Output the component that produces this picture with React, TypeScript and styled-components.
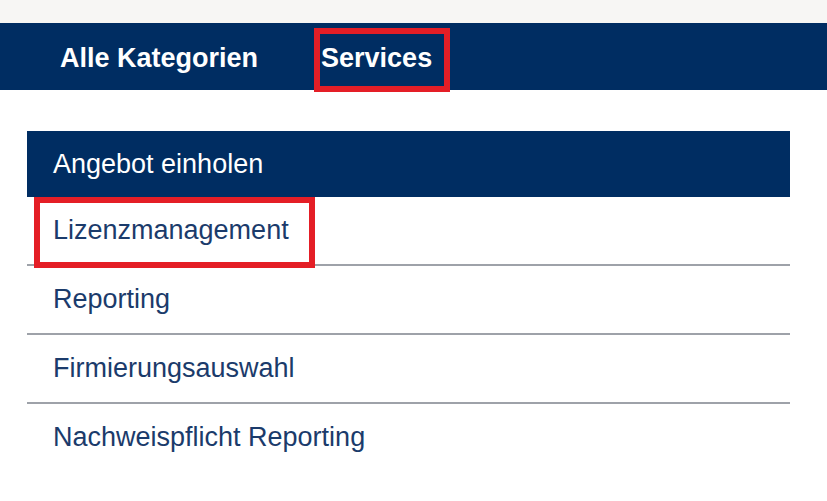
import styled, { createGlobalStyle } from 'styled-components';

const GlobalStyle = createGlobalStyle`
  html, body {
    margin: 0;
    padding: 0;
    background: #ffffff;
    font-family: "Liberation Sans", Arial, sans-serif;
  }
`;

const menuItems = ['Lizenzmanagement', 'Reporting', 'Firmierungsauswahl', 'Nachweispflicht Reporting'];

export default function App() {
  return (
    <>
      <GlobalStyle />
      <Page>
        <TopStrip />
        <NavBar>
          <NavItem>Alle Kategorien</NavItem>
          <NavItem $marked>Services</NavItem>
        </NavBar>
        <Content>
          <Panel>
            <PanelHeader>Angebot einholen</PanelHeader>
            {menuItems.map((item, i) => (
              <Row key={item} $last={i === menuItems.length - 1}>
                <RowLabel $marked={i === 0}>{item}</RowLabel>
              </Row>
            ))}
          </Panel>
        </Content>
      </Page>
    </>
  );
}

const Page = styled.div`
  width: 827px;
  height: 501px;
  overflow: hidden;
`;

const TopStrip = styled.div`
  height: 23px;
  background: #f7f6f4;
`;

const NavBar = styled.nav`
  display: flex;
  align-items: center;
  gap: 63px;
  height: 67px;
  padding: 0 0 0 60px;
  background: #002d62;
  box-sizing: border-box;
`;

const NavItem = styled.div<{ $marked?: boolean }>`
  position: relative;
  color: #ffffff;
  font-size: 27px;
  font-weight: bold;
  padding-top: 3px;

  ${(p) =>
    p.$marked &&
    `
    &::after {
      content: '';
      position: absolute;
      left: -7px;
      right: -18px;
      top: -12px;
      bottom: -18px;
      border: 6px solid #e41e26;
      pointer-events: none;
    }
  `}
`;

const Content = styled.div`
  padding: 41px 37px 0 27px;
`;

const Panel = styled.div`
  display: flex;
  flex-direction: column;
  width: 763px;
`;

const PanelHeader = styled.div`
  display: flex;
  align-items: center;
  height: 66px;
  padding-left: 26px;
  background: #002d62;
  color: #ffffff;
  font-size: 27px;
`;

const Row = styled.div<{ $last?: boolean }>`
  display: flex;
  align-items: center;
  height: 67px;
  padding-left: 26px;
  border-bottom: 2px solid ${(p) => (p.$last ? 'transparent' : '#9ea2a9')};
  color: #1b3b6b;
  font-size: 27px;
`;

const RowLabel = styled.span<{ $marked?: boolean }>`
  position: relative;

  ${(p) =>
    p.$marked &&
    `
    &::after {
      content: '';
      position: absolute;
      left: -19px;
      right: -26px;
      top: -18px;
      bottom: -22px;
      border: 6px solid #e41e26;
      pointer-events: none;
    }
  `}
`;
